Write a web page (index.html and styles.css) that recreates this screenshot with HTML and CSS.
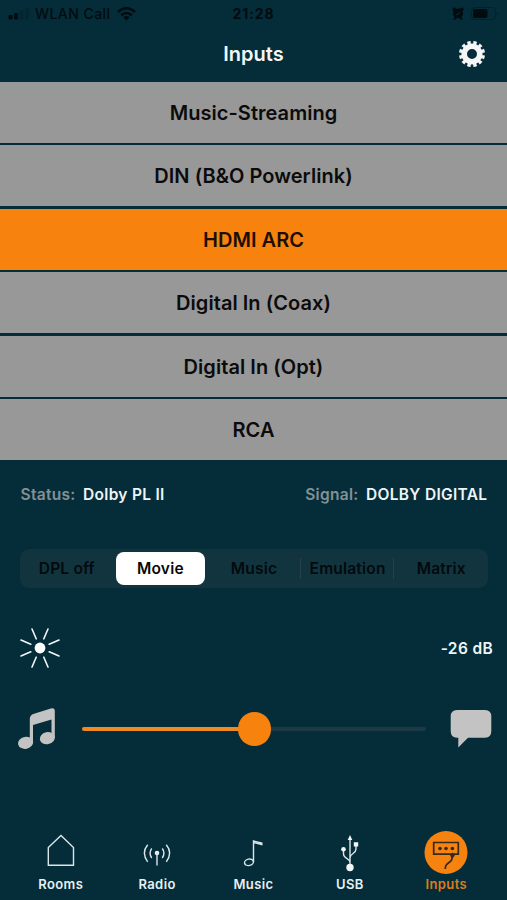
FILE: index.html
```html
<!DOCTYPE html>
<html lang="en">
<head>
<meta charset="utf-8">
<title>Inputs</title>
<link rel="stylesheet" href="styles.css">
</head>
<body>
<div class="app">
  <div class="statusbar">
    <div class="carrier">
      <svg width="22" height="12" viewBox="0 0 22 12"><rect x="0.5" y="7" width="4" height="4.5" rx="1"/><rect x="6" y="5" width="4" height="6.5" rx="1"/><g opacity=".2"><rect x="11.5" y="2.5" width="4" height="9" rx="1"/><rect x="17" y="0" width="4" height="11.500" rx="1"/></g></svg>
      <span class="carrier-name">WLAN Call</span>
      <svg class="wifi" width="19" height="14" viewBox="0 0 19 14" fill="none" stroke="currentColor" stroke-width="2.5"><path d="M1 5Q9.500-2.400 18 5M4.200 8.300Q9.500 3.800 14.800 8.300"/><path d="M9.500 13.500L6.300 10.300Q9.500 7.800 12.700 10.300Z" fill="currentColor" stroke="none"/></svg>
    </div>
    <span class="clock">21:28</span>
    <div class="power">
      <svg width="12" height="13" viewBox="0 0 12 13"><circle cx="6" cy="6.500" r="5"/><circle cx="2.300" cy="2.300" r="1.800"/><circle cx="9.700" cy="2.300" r="1.800"/><path d="M2 12.500L4 10M10 12.500L8 10" stroke="currentColor" stroke-width="2"/><path d="M4.200 7.500L6 7.500L8 4.800" fill="none" stroke="#04303c"/></svg>
      <svg width="28" height="13" viewBox="0 0 28 13"><rect x=".5" y=".5" width="24" height="12" rx="3.500" fill="none" stroke="currentColor" opacity=".35"/><rect x="2" y="2" width="14.500" height="9" rx="2"/><path d="M26 4.500Q28 6.500 26 8.500Z" opacity=".45"/></svg>
    </div>
  </div>
  <header class="header">
    <h1>Inputs</h1>
    <svg class="gear" width="28" height="28" viewBox="-14 -14 28 28" fill="none" stroke="#f4f6f7"><circle r="7.800" stroke-width="5.600"/><circle r="11.300" stroke-width="3.400" pathLength="120" stroke-dasharray="5.600 4.400" stroke-dashoffset="7.800"/></svg>
  </header>
  <main>
    <div class="inputs">
      <button class="input">Music-Streaming</button>
      <button class="input">DIN (B&amp;O Powerlink)</button>
      <button class="input selected">HDMI ARC</button>
      <button class="input">Digital In (Coax)</button>
      <button class="input">Digital In (Opt)</button>
      <button class="input">RCA</button>
    </div>
    <div class="info">
      <div><span class="label">Status:</span><span class="status-value">Dolby PL II</span></div>
      <div><span class="label">Signal:</span><span class="signal-value">DOLBY DIGITAL</span></div>
    </div>
    <div class="segments">
      <button class="segment">DPL off</button>
      <button class="segment active">Movie</button>
      <button class="segment">Music</button>
      <button class="segment divided">Emulation</button>
      <button class="segment divided">Matrix</button>
    </div>
    <div class="level">
      <svg width="42" height="42" viewBox="-21 -21 42 42" stroke="#f2f7f8" stroke-width="1.600" stroke-linecap="round"><circle r="5.400" fill="#fff" stroke="none"/><path d="M3.800-9.200L8-19M-3.800-9.200L-8-19M3.800 9.200L8 19M-3.800 9.200L-8 19M9.200-3.800L19-8M9.200 3.800L19 8M-9.200-3.800L-19-8M-9.200 3.800L-19 8"/></svg>
      <span>-26 dB</span>
    </div>
    <div class="balance">
      <svg width="40" height="42" viewBox="0 0 40 42" fill="#c3c3c4"><path d="M11.800 33V11Q11.800 7.300 15.300 6L32.800 .5Q36.800-.5 36.800 3V30H33.500V11.500L15 17V35H11.800Z"/><ellipse cx="7.600" cy="34.800" rx="7.600" ry="6" transform="rotate(-12 7.600 34.800)"/><ellipse cx="29.300" cy="30.200" rx="7.600" ry="6" transform="rotate(-12 29.300 30.200)"/></svg>
      <div class="track"><div class="fill"></div><div class="knob"></div></div>
      <svg width="42" height="38" viewBox="0 0 42 38" fill="#c3c3c4"><path d="M7 0H35Q41.300 0 41.300 6.500V21Q41.300 27.700 35 27.700H18L8.300 37.500V27.700H7Q.7 27.700 .7 21V6.500Q.7 0 7 0Z"/></svg>
    </div>
  </main>
  <nav class="tabs">
    <a class="tab"><svg width="44" height="44" viewBox="0 0 44 44"><path d="M9.300 17.500L22 5.500L34.500 17.500V35.300H9.300Z"/></svg><span>Rooms</span></a>
    <a class="tab"><svg width="44" height="44" viewBox="0 0 44 44"><circle cx="22" cy="23" r="2.300" fill="#e8f0f2" stroke="none"/><path d="M22 23V35.500M16.700 18.500Q13.400 23 16.700 28M27.300 18.500Q30.600 23 27.300 28M12.700 14.800Q6 23 12.700 31.800M31.300 14.800Q38 23 31.300 31.800"/></svg><span>Radio</span></a>
    <a class="tab"><svg width="44" height="44" viewBox="0 0 44 44"><path d="M22.500 32V11L30.800 13V14.500L22.500 12.500"/><ellipse cx="18" cy="32.300" rx="4.500" ry="3.200" transform="rotate(-12 18 32.300)"/></svg><span>Music</span></a>
    <a class="tab"><svg width="44" height="44" viewBox="0 0 44 44"><path d="M22 38V8M22 32C22 28 15.500 29 15.500 24V19.500M22 28C22 23 28 24 28 19V14.500"/><g fill="#f2f6f7" stroke="none"><circle cx="22" cy="37.500" r="3.700"/><circle cx="15.500" cy="19.300" r="2.300"/><path d="M25.800 12.200H30.200V16.600H25.800ZM22 5L24.300 10H19.700Z"/></g></svg><span>USB</span></a>
    <a class="tab current"><svg width="44" height="44" viewBox="0 0 44 44"><circle cx="22" cy="22.500" r="21.500" fill="#f6820f" stroke="none"/><g stroke="#352b1c" stroke-width="1.700"><path d="M9.700 12.500H34.300V24.200H9.700Z"/><path d="M28 26.500Q28.500 30.500 25 32.500Q21 35 21.300 39"/></g><g fill="#352b1c" stroke="none"><circle cx="16" cy="18.500" r="1.800"/><circle cx="22" cy="18.500" r="1.800"/><circle cx="28.400" cy="18.500" r="1.800"/><path d="M28.500 22.500L31 25L29.500 27.500H27.200L26 25Z"/></g></svg><span>Inputs</span></a>
  </nav>
</div>
</body>
</html>
```
FILE: styles.css
```css
* { box-sizing: border-box; }
html { background: #042d39; }
body { margin: 0; background: #042d39; font-family: Inter, "Liberation Sans", sans-serif; }
button { border: 0; margin: 0; padding: 0; background: none; font: inherit; color: inherit; letter-spacing: inherit; }
svg { display: block; flex: none; }
.app { width: 507px; height: 900px; display: flex; flex-direction: column; overflow: hidden; }
.statusbar { height: 27px; display: grid; grid-template-columns: 1fr auto 1fr; align-items: center; padding: 0 8px; font-size: 14px; color: #020b0f; fill: #020b0f; }
.carrier { display: flex; align-items: center; gap: 5px; }
.carrier-name { font-weight: 500; letter-spacing: .45px; }
.wifi { margin-left: 1px; }
.clock { font-weight: 700; letter-spacing: .9px; }
.power { display: flex; justify-content: flex-end; align-items: center; gap: 7px; }
.header { height: 54.500px; display: grid; grid-template-columns: 1fr auto 1fr; align-items: center; padding: 0 21px; }
h1 { grid-column: 2; margin: 0; font-size: 20px; font-weight: 600; color: #f3f7f8; }
.gear { justify-self: end; }
main { flex: 1; }
.inputs { display: grid; grid-template-rows: repeat(6, 61px); gap: 2.500px; height: 378.500px; }
.input { padding-top: 1px; background: #989898; color: #0b0b0b; font-size: 20px; font-weight: 600; letter-spacing: .05px; }
.selected { background: #f8820e; color: #1d0e02; }
.info { display: flex; justify-content: space-between; align-items: center; height: 67px; padding: 1px 19.700px 0 20.500px; font-size: 15.500px; font-weight: 600; letter-spacing: .3px; color: #eff5f7; }
.label { color: #839196; font-weight: 600; margin-right: 7.500px; }
.segments { display: grid; grid-template-columns: repeat(5, 1fr); height: 39px; margin: 22px 19px 0 20px; background: #12343e; border-radius: 9px; font-size: 15.500px; font-weight: 600; letter-spacing: .2px; color: #020a0d; }
.segment { position: relative; }
.active { margin: 3px 2.500px; border-radius: 8px; background: #fff; color: #080808; }
.divided::before { content: ""; position: absolute; left: -1px; top: 9px; width: 1px; height: 21px; background: #25424b; }
.level { display: flex; justify-content: space-between; align-items: center; height: 42px; margin: 39px 14px 0 18.500px; font-size: 15.500px; font-weight: 600; letter-spacing: .35px; color: #eff5f7; }
.balance { display: flex; align-items: center; height: 42px; margin: 39px 15px 0 18px; }
.track { position: relative; width: 345px; height: 4px; margin: 0 24px; border-radius: 2px; background: #1c3b45; }
.fill { width: 50%; height: 4px; border-radius: 2px; background: #ed8b22; }
.knob { position: absolute; left: 155.500px; top: -15px; width: 33.500px; height: 33.500px; border-radius: 50%; background: #f8820e; }
.tabs { display: grid; grid-template-columns: repeat(5, 1fr); height: 70px; padding: 0 12.500px; }
.tab { display: flex; flex-direction: column; align-items: center; gap: 1px; font-size: 13px; line-height: 18px; font-weight: 600; letter-spacing: .4px; color: #e8f0f2; }
.tab svg { fill: none; stroke: #dce6e9; stroke-width: 1.400; }
.current { color: #dc7d1c; }
```
